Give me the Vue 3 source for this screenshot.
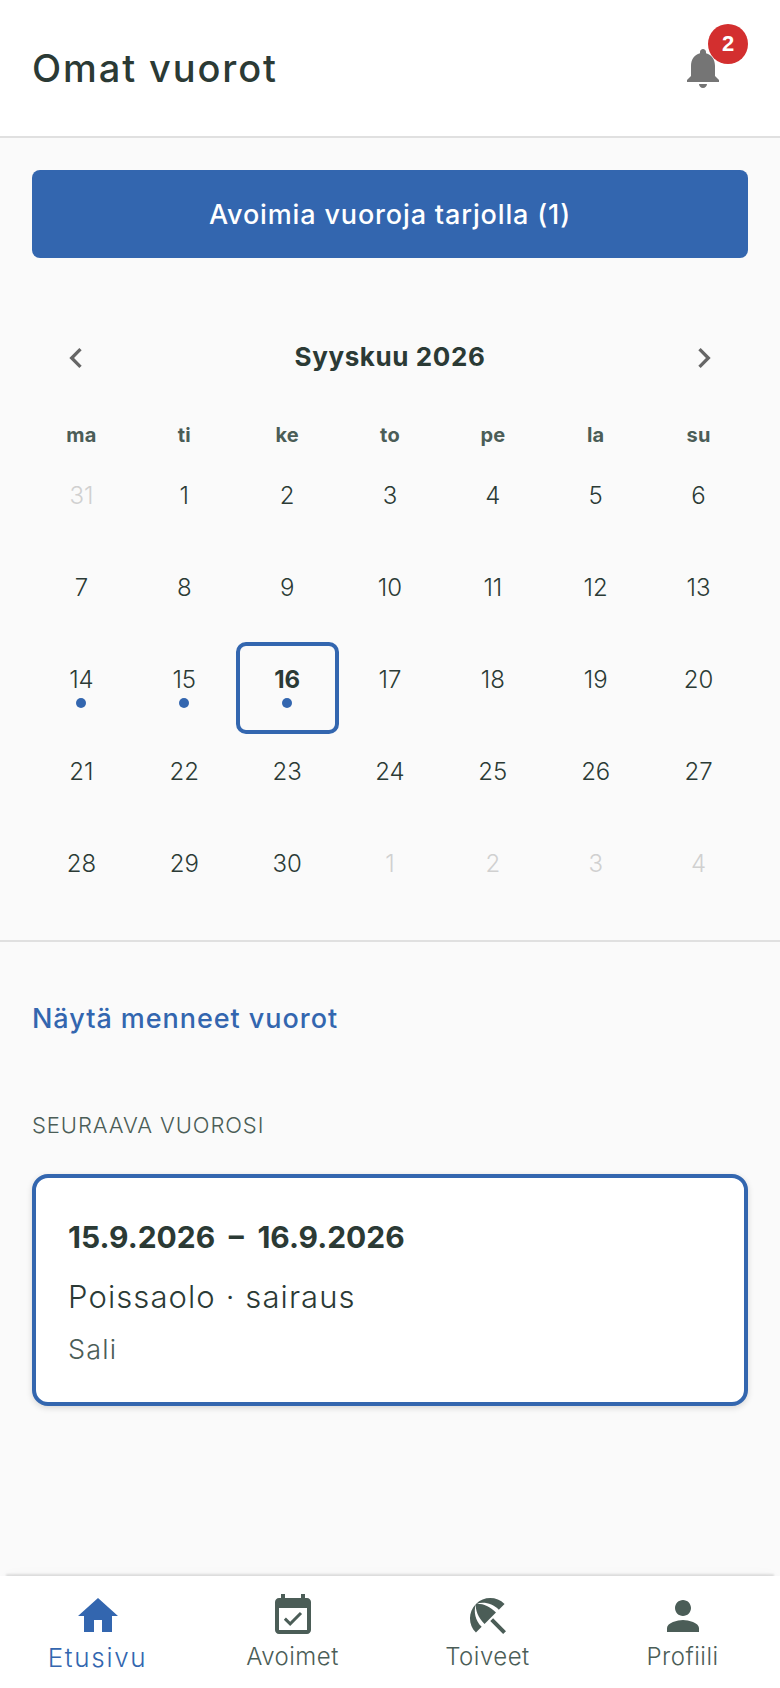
<template>
  <div class="page">
    <header class="top-bar">
      <h1 class="title">Omat vuorot</h1>
      <button class="bell" type="button" aria-label="Ilmoitukset">
        <svg viewBox="0 0 24 24" class="bell-icon"><path d="M12 22c1.1 0 2-.9 2-2h-4c0 1.1.89 2 2 2zm6-6v-5c0-3.07-1.64-5.64-4.5-6.32V4c0-.83-.67-1.5-1.5-1.5s-1.5.67-1.5 1.5v.68C7.63 5.36 6 7.92 6 11v5l-2 2v1h16v-1l-2-2z" /></svg>
        <span class="badge">2</span>
      </button>
    </header>

    <main class="content">
      <button class="open-shifts" type="button">Avoimia vuoroja tarjolla (1)</button>

      <section class="calendar">
        <div class="month-row">
          <svg viewBox="0 0 24 24" class="chevron"><path d="M15.41 7.41L14 6l-6 6 6 6 1.41-1.41L10.83 12z" /></svg>
          <span class="month">Syyskuu 2026</span>
          <svg viewBox="0 0 24 24" class="chevron"><path d="M10 6L8.59 7.41 13.17 12l-4.58 4.59L10 18l6-6z" /></svg>
        </div>
        <div class="weekdays">
          <span v-for="d in weekdays" :key="d">{{ d }}</span>
        </div>
        <div class="days">
          <div
            v-for="day in days"
            :key="day.key"
            class="day"
            :class="{ muted: day.muted, selected: day.selected }"
          >
            <span class="num">{{ day.n }}</span>
            <span v-if="day.dot" class="dot"></span>
          </div>
        </div>
      </section>

      <section class="next">
        <a class="past-link">Näytä menneet vuorot</a>
        <div class="next-label">SEURAAVA VUOROSI</div>
        <div class="shift-card">
          <div class="shift-date">15.9.2026 – 16.9.2026</div>
          <div class="shift-type">Poissaolo · sairaus</div>
          <div class="shift-place">Sali</div>
        </div>
      </section>
    </main>

    <nav class="bottom-nav">
      <div v-for="item in navItems" :key="item.label" class="nav-item" :class="{ active: item.active }">
        <svg viewBox="0 0 24 24" class="nav-icon"><path :d="item.icon" /></svg>
        <span class="nav-label">{{ item.label }}</span>
      </div>
    </nav>
  </div>
</template>

<script setup>
const weekdays = ['ma', 'ti', 'ke', 'to', 'pe', 'la', 'su']

const days = []
days.push({ key: 'p31', n: 31, muted: true })
for (let i = 1; i <= 30; i++) {
  days.push({ key: 'd' + i, n: i, dot: i >= 14 && i <= 16, selected: i === 16 })
}
for (let i = 1; i <= 4; i++) {
  days.push({ key: 'n' + i, n: i, muted: true })
}

const navItems = [
  { label: 'Etusivu', active: true, icon: 'M10 20v-6h4v6h5v-8h3L12 3 2 12h3v8z' },
  { label: 'Avoimet', icon: 'M16.53 11.06L15.47 10l-4.88 4.88-2.12-2.12-1.06 1.06L10.59 17l5.94-5.94zM19 3h-1V1h-2v2H8V1H6v2H5c-1.11 0-1.99.9-1.99 2L3 19c0 1.1.89 2 2 2h14c1.1 0 2-.9 2-2V5c0-1.1-.9-2-2-2zm0 16H5V8h14v11z' },
  { label: 'Toiveet', icon: 'M13.127 14.56l1.43-1.43 6.44 6.443L19.57 21zm4.293-5.73l2.86-2.86c-3.95-3.95-10.35-3.96-14.3-.02 3.93-1.3 8.31-.25 11.44 2.88zM5.95 5.98c-3.94 3.95-3.93 10.35.02 14.3l2.86-2.86C5.7 14.29 4.65 9.91 5.95 5.98zm.02-.02l-.01.01c-.38 3.01 1.17 6.88 4.3 10.02l5.73-5.73c-3.13-3.13-7.01-4.68-10.02-4.3z' },
  { label: 'Profiili', icon: 'M12 12c2.21 0 4-1.79 4-4s-1.79-4-4-4-4 1.79-4 4 1.79 4 4 4zm0 2c-2.67 0-8 1.34-8 4v2h16v-2c0-2.66-5.33-4-8-4z' }
]
</script>

<style>
html, body {
  margin: 0;
  background: #fafafa;
}
</style>

<style scoped>
.page {
  height: 1688px;
  display: flex;
  flex-direction: column;
  font-family: Inter, "Open Sans", sans-serif;
  color: #2b3a35;
  overflow: hidden;
}

.top-bar {
  height: 138px;
  box-sizing: border-box;
  border-bottom: 2px solid #e0e0e0;
  background: #fff;
  display: flex;
  align-items: center;
  justify-content: space-between;
  padding: 0 32px;
}

.title {
  margin: 0;
  font-size: 38px;
  font-weight: 500;
  letter-spacing: 1.9px;
}

.bell {
  position: relative;
  width: 48px;
  height: 48px;
  margin: 0 21px 0 0;
  padding: 0;
  border: 0;
  background: none;
}

.bell-icon {
  width: 48px;
  height: 48px;
  display: block;
  fill: #757575;
}

.badge {
  position: absolute;
  top: -20px;
  left: 29px;
  width: 40px;
  height: 40px;
  border-radius: 50%;
  background: #d32f2f;
  color: #fff;
  font-size: 22px;
  font-weight: 700;
  line-height: 40px;
  text-align: center;
}

.content {
  flex: 1;
  background: #fafafa;
}

.open-shifts {
  display: block;
  width: 716px;
  height: 88px;
  margin: 32px 32px 0;
  border: 0;
  border-radius: 8px;
  background: #3366af;
  color: #fff;
  font-family: inherit;
  font-size: 27px;
  font-weight: 500;
  letter-spacing: 0.85px;
}

.calendar {
  padding: 78px 30px 22px;
  border-bottom: 2px solid #e0e0e0;
}

.month-row {
  height: 40px;
  display: flex;
  align-items: center;
  justify-content: space-between;
  padding: 0 26px;
}

.chevron {
  width: 40px;
  height: 40px;
  fill: #666;
  margin-top: 4px;
}

.month {
  font-size: 26px;
  font-weight: 700;
  letter-spacing: 0.6px;
}

.weekdays {
  margin-top: 44px;
  height: 30px;
  display: grid;
  grid-template-columns: repeat(7, 1fr);
  text-align: center;
  font-size: 20px;
  font-weight: 700;
  letter-spacing: 0.2px;
  line-height: 30px;
  color: #4b5d57;
}

.days {
  margin-top: 8px;
  display: grid;
  grid-template-columns: repeat(7, 1fr);
  grid-auto-rows: 92px;
}

.day {
  box-sizing: border-box;
  padding-top: 20px;
  border: 4px solid transparent;
  border-radius: 10px;
  display: flex;
  flex-direction: column;
  align-items: center;
  font-size: 24px;
  font-weight: 350;
  line-height: 28px;
}

.day.muted {
  color: #d0d0d0;
}

.day.selected {
  border-color: #3366af;
  font-weight: 700;
}

.dot {
  width: 10px;
  height: 10px;
  margin-top: 4px;
  border-radius: 50%;
  background: #3366af;
}

.next {
  padding: 59px 32px 0;
}

.past-link {
  display: block;
  height: 36px;
  line-height: 36px;
  font-size: 27px;
  font-weight: 500;
  letter-spacing: 0.95px;
  color: #3366af;
}

.next-label {
  margin-top: 74px;
  height: 28px;
  line-height: 28px;
  font-size: 22px;
  font-weight: 350;
  letter-spacing: 0.9px;
  color: #4b5d57;
}

.shift-card {
  box-sizing: border-box;
  height: 232px;
  margin-top: 35px;
  padding: 38px 32px 0;
  border: 4px solid #3366af;
  border-radius: 16px;
  background: #fff;
  box-shadow: 0 2px 6px rgba(0, 0, 0, 0.14);
}

.shift-date {
  height: 42px;
  line-height: 42px;
  font-size: 30px;
  font-weight: 700;
  word-spacing: 6.5px;
}

.shift-type {
  margin-top: 18px;
  height: 42px;
  line-height: 42px;
  font-size: 31px;
  font-weight: 350;
  letter-spacing: 1.1px;
}

.shift-place {
  margin-top: 14px;
  height: 36px;
  line-height: 36px;
  font-size: 27px;
  font-weight: 350;
  letter-spacing: 1.2px;
  color: #4b5d57;
}

.bottom-nav {
  height: 112px;
  flex: none;
  display: grid;
  grid-template-columns: repeat(4, 1fr);
  background: #fff;
  box-shadow: 0 -8px 2px -6px rgba(0, 0, 0, 0.11), 0 -6px 14px -6px rgba(0, 0, 0, 0.03);
  position: relative;
}

.nav-item {
  display: flex;
  flex-direction: column;
  align-items: center;
  padding-top: 16px;
  color: #4b5d57;
}

.nav-icon {
  width: 48px;
  height: 48px;
  fill: #4b5d57;
}

.nav-label {
  margin-top: 2px;
  font-size: 24px;
  font-weight: 350;
  letter-spacing: 0.5px;
  line-height: 30px;
}

.nav-item.active {
  color: #3366af;
}

.nav-item.active .nav-icon {
  fill: #3366af;
}

.nav-item.active .nav-label {
  margin-top: 3px;
  font-size: 26px;
  letter-spacing: 1.7px;
}
</style>
